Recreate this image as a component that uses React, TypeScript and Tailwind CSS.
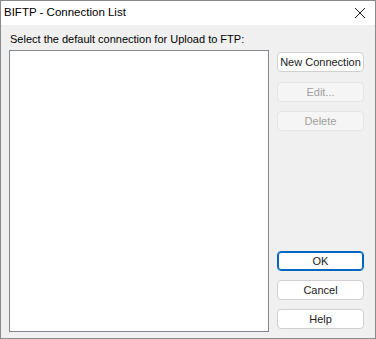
import React from "react";

const font = { fontFamily: '"Liberation Sans", Arial, sans-serif' };

function Btn({ label, disabled, primary }: { label: string; disabled?: boolean; primary?: boolean }) {
  let cls =
    "flex h-[20px] w-[87px] items-center justify-center whitespace-nowrap rounded-[4px] border text-[11px] leading-none ";
  if (disabled) cls += "border-[#e5e5e5] bg-[#f5f5f5] text-[#a0a0a0]";
  else if (primary) cls += "border-[#0067c0] bg-white text-[#1a1a1a] shadow-[inset_0_0_0_1px_#0067c0]";
  else cls += "border-[#d0d0d0] bg-white text-[#1a1a1a]";
  return <div className={cls}>{label}</div>;
}

export default function App() {
  return (
    <div className="flex h-[339px] w-[376px] flex-col border border-[#8a8a8a] bg-[#f0f0f0]" style={font}>
      <div className="flex h-[24px] items-center justify-between bg-white pl-[3px] pr-[8px]">
        <span className="whitespace-nowrap text-[11.5px] text-black">BIFTP - Connection List</span>
        <svg width="12" height="12" viewBox="0 0 12 12" className="mr-[1px]">
          <path d="M1 1 L11 11 M11 1 L1 11" stroke="#1a1a1a" strokeWidth="1" fill="none" />
        </svg>
      </div>
      <div className="flex flex-1 pl-[8px] pt-[7px]">
        <div className="flex w-[260px] flex-col">
          <div className="h-[18px] whitespace-nowrap pl-[1px] text-[11px] leading-[14px] text-black">
            Select the default connection for Upload to FTP:
          </div>
          <div className="h-[282px] border border-[#828790] bg-white" />
        </div>
        <div className="ml-[8px] flex flex-col pt-[20px]">
          <Btn label="New Connection" />
          <div className="mt-[10px]">
            <Btn label="Edit..." disabled />
          </div>
          <div className="mt-[9px]">
            <Btn label="Delete" disabled />
          </div>
          <div className="mt-[120px]">
            <Btn label="OK" primary />
          </div>
          <div className="mt-[9px]">
            <Btn label="Cancel" />
          </div>
          <div className="mt-[9px]">
            <Btn label="Help" />
          </div>
        </div>
      </div>
    </div>
  );
}
